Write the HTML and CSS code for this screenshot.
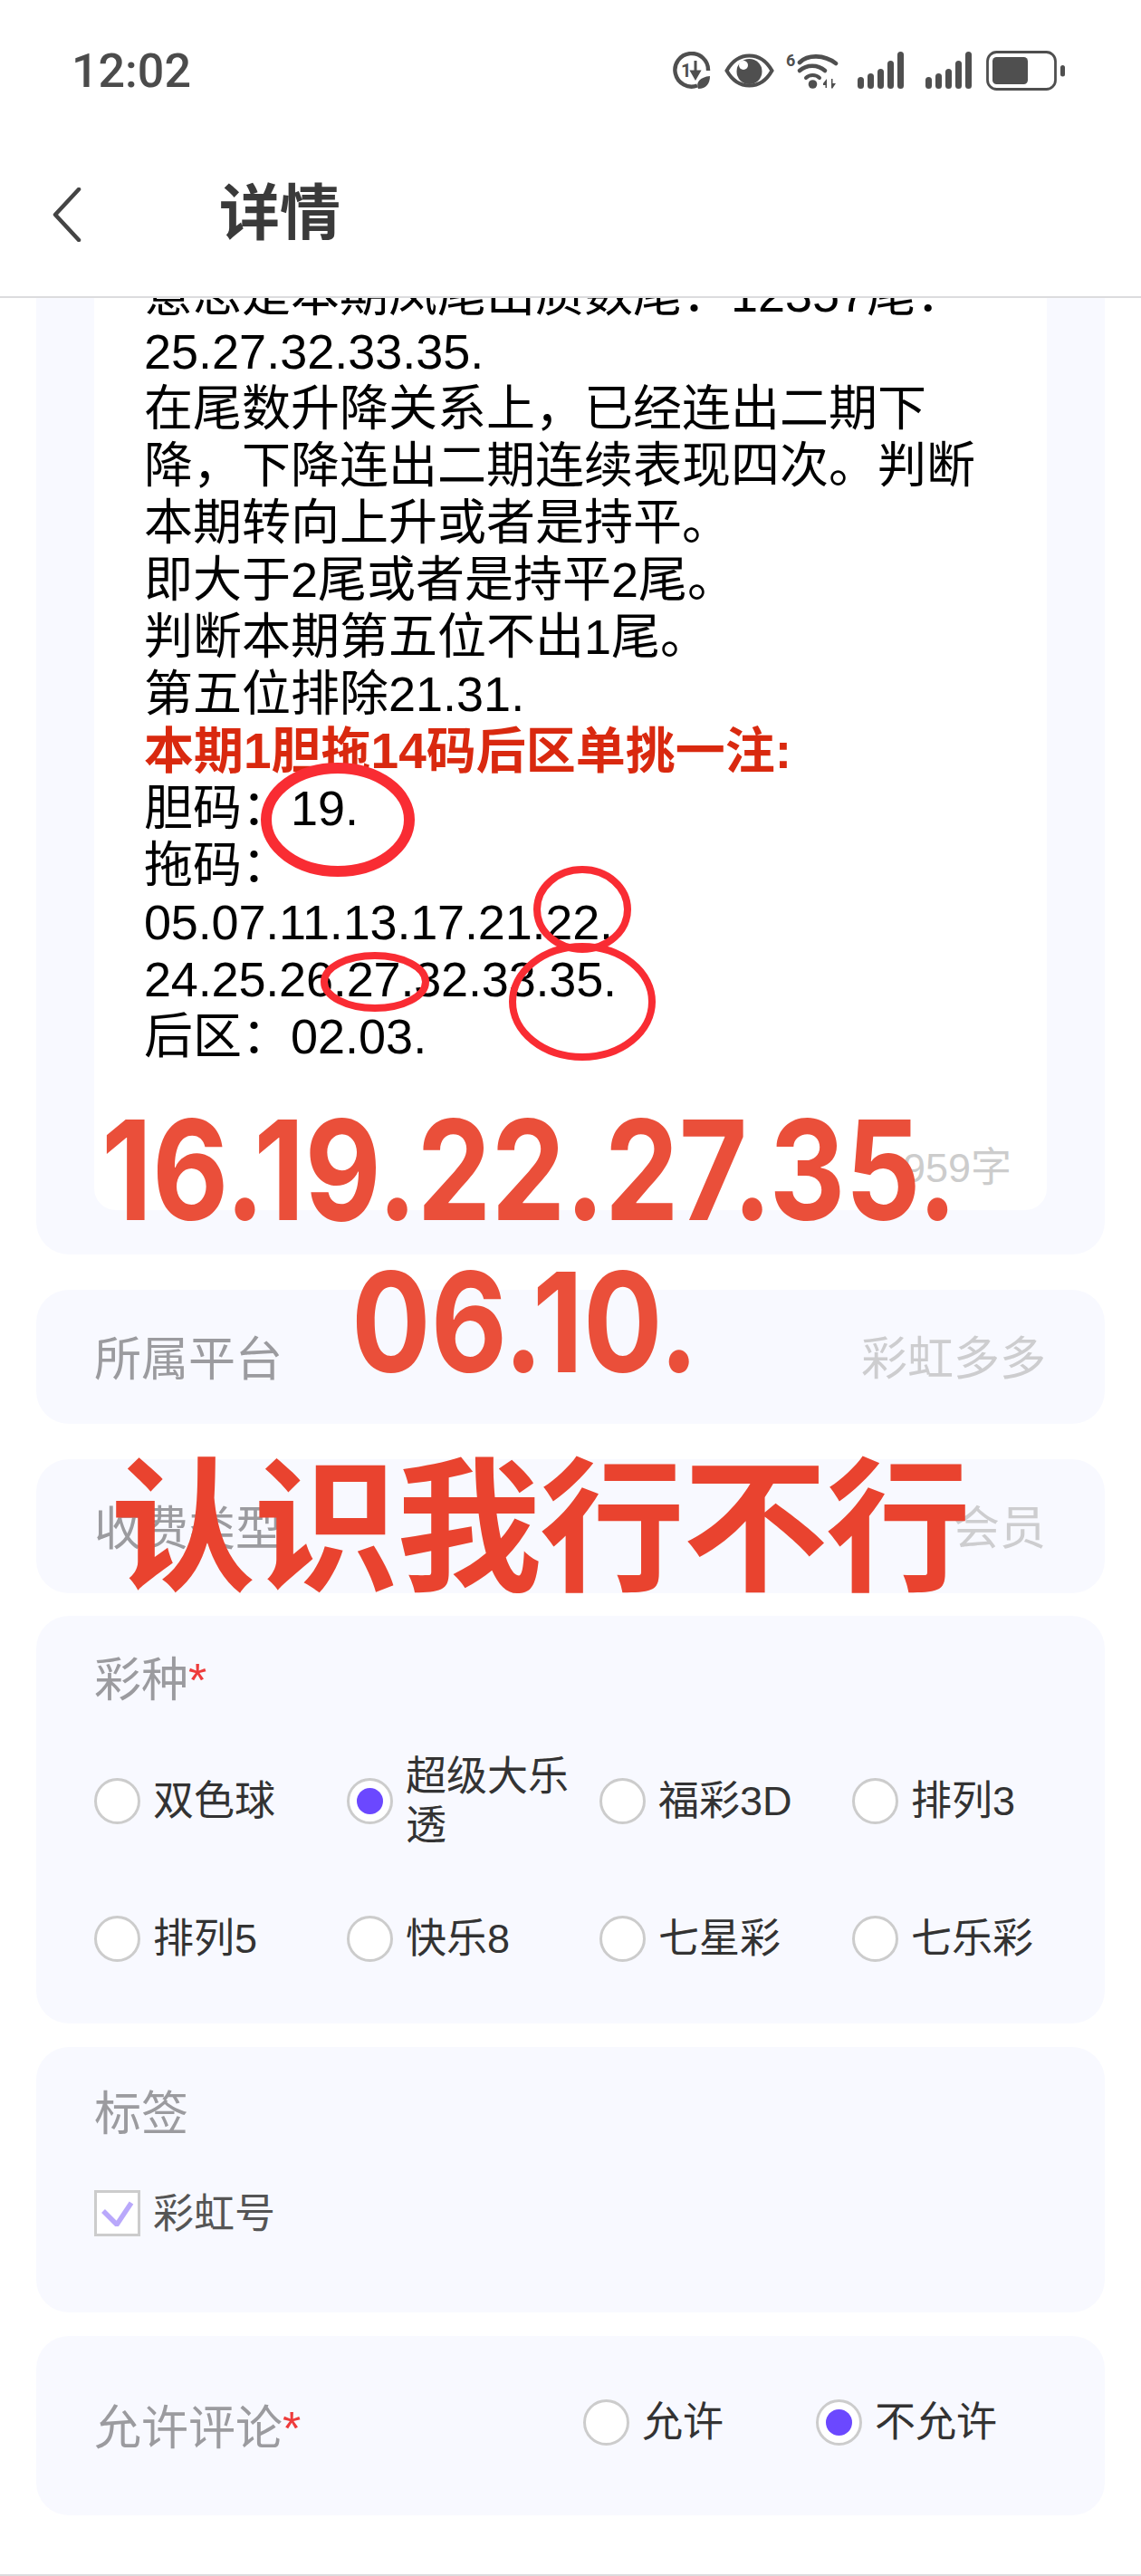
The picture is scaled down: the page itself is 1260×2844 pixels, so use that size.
FILE: index.html
```html
<!DOCTYPE html>
<html lang="zh-CN">
<head>
<meta charset="utf-8">
<title>详情</title>
<link rel="stylesheet" href="styles.css">
</head>
<body>
<div class="page">
  <div class="status">
    <span class="time">12:02</span>
    <div class="status-icons">
      <svg class="ic" width="42" height="42" viewBox="0 0 42 42"><path d="M27 37.5A18.3 18.3 0 1 1 39 21" fill="none" stroke="#4f4f4f" stroke-width="4.4"/><text x="9" y="28" class="ic-t" font-size="20">1</text><path d="M25 10v17M25 29l-4-7h8z" stroke="#4f4f4f" stroke-width="3" fill="#4f4f4f"/><path d="M28 41c-3-7 2-13 13-14 0 8-4 14-13 14z" fill="#4f4f4f"/></svg>
      <svg class="ic eye" width="55" height="38" viewBox="0 0 55 38"><path d="M2.5 19C15-3 40-3 52.500 19 40 41 15 41 2.500 19z" fill="none" stroke="#4f4f4f" stroke-width="4"/><circle cx="27.500" cy="20" r="14" fill="#4f4f4f"/><circle cx="21" cy="13" r="5" fill="#fff"/></svg>
      <svg class="ic wifi" width="58" height="42" viewBox="0 0 58 42"><text x="0" y="17" class="ic-t" font-size="18">6</text><path d="M15 13C24 4 42 4 55 14" fill="none" stroke="#4f4f4f" stroke-width="4.600" stroke-linecap="round"/><path d="M15 22c8-7 20-7 28 0" fill="none" stroke="#4f4f4f" stroke-width="4.600" stroke-linecap="round"/><path d="M22 30c4-4 11-4 15 0" fill="none" stroke="#4f4f4f" stroke-width="4" stroke-linecap="round"/><circle cx="29.500" cy="37" r="4.800" fill="#4f4f4f"/><path d="M41 36l4-5v10h-1.500v-3H41zM50 31h1.500v5H55l-4 6-1-1z" fill="#4f4f4f"/></svg>
      <svg class="ic sig" width="51" height="42" viewBox="0 0 51 42"><g fill="#4f4f4f"><rect x="0" y="28" width="7" height="13" rx="3.500"/><rect x="11" y="24" width="7" height="17" rx="3.500"/><rect x="22" y="19" width="7" height="22" rx="3.500"/><rect x="33" y="10" width="7" height="31" rx="3.500"/><rect x="44" y="0" width="7" height="41" rx="3.500"/></g></svg>
      <svg class="ic sig2" width="51" height="42" viewBox="0 0 51 42"><g fill="#4f4f4f"><rect x="0" y="28" width="7" height="13" rx="3.500"/><rect x="11" y="24" width="7" height="17" rx="3.500"/><rect x="22" y="19" width="7" height="22" rx="3.500"/><rect x="33" y="10" width="7" height="31" rx="3.500"/><rect x="44" y="0" width="7" height="41" rx="3.500"/></g></svg>
      <svg class="ic bat" width="87" height="44" viewBox="0 0 87 44"><rect x="1.500" y="1.500" width="75" height="41" rx="10" fill="none" stroke="#4f4f4f" stroke-width="2.800"/><rect x="7" y="7" width="39" height="30" rx="4.500" fill="#4f4f4f"/><rect x="82" y="16" width="5" height="12.500" rx="2.500" fill="#4f4f4f"/></svg>
    </div>
  </div>

  <header class="nav">
    <svg class="back" width="32" height="60" viewBox="0 0 32 60"><path d="M29 2L3 30l26 28" fill="none" stroke="#444" stroke-width="4.500" stroke-linecap="round" stroke-linejoin="round"/></svg>
    <h1 class="nav-title">详情</h1>
  </header>

  <main class="content">
    <section class="card post-card">
      <div class="post">
        <p>意思是本期凤尾出质数尾：12357尾：25.27.32.33.35.</p>
        <p>在尾数升降关系上，已经连出二期下降，下降连出二期连续表现四次。判断本期转向上升或者是持平。</p>
        <p>即大于2尾或者是持平2尾。</p>
        <p>判断本期第五位不出1尾。</p>
        <p>第五位排除21.31.</p>
        <p class="hot">本期1胆拖14码后区单挑一注:</p>
        <p>胆码：19.</p>
        <p>拖码：</p>
        <p class="nums">05.07.11.13.17.21.22.</p>
        <p class="nums">24.25.26.27.32.33.35.</p>
        <p>后区：02.03.</p>
        <div class="counter">959字</div>
      </div>
    </section>

    <section class="card row-card">
      <span class="label">所属平台</span>
      <span class="value">彩虹多多</span>
    </section>

    <section class="card row-card">
      <span class="label">收费类型</span>
      <span class="value">会员</span>
    </section>

    <section class="card kind-card">
      <div class="label">彩种<span class="req">*</span></div>
      <div class="kinds">
        <label class="opt"><span class="radio"></span><span class="txt">双色球</span></label>
        <label class="opt"><span class="radio on"></span><span class="txt">超级大乐透</span></label>
        <label class="opt"><span class="radio"></span><span class="txt">福彩3D</span></label>
        <label class="opt"><span class="radio"></span><span class="txt">排列3</span></label>
        <label class="opt"><span class="radio"></span><span class="txt">排列5</span></label>
        <label class="opt"><span class="radio"></span><span class="txt">快乐8</span></label>
        <label class="opt"><span class="radio"></span><span class="txt">七星彩</span></label>
        <label class="opt"><span class="radio"></span><span class="txt">七乐彩</span></label>
      </div>
    </section>

    <section class="card tag-card">
      <div class="label">标签</div>
      <label class="opt tag-opt">
        <span class="check"><svg width="36" height="28" viewBox="0 0 36 28"><path d="M2 11l15 15L33 2" fill="none" stroke="#b9a8fb" stroke-width="5.500"/></svg></span>
        <span class="txt">彩虹号</span>
      </label>
    </section>

    <section class="card allow-card">
      <span class="label">允许评论<span class="req">*</span></span>
      <div class="allow-opts">
        <label class="opt"><span class="radio"></span><span class="txt">允许</span></label>
        <label class="opt"><span class="radio on"></span><span class="txt">不允许</span></label>
      </div>
    </section>
  </main>
  <div class="foot-line"></div>

  <svg class="marks" width="1260" height="2844" viewBox="0 0 1260 2844">
    <ellipse cx="373" cy="905" rx="79" ry="57" fill="none" stroke="#f92c33" stroke-width="12"/>
    <ellipse cx="643" cy="1004" rx="50" ry="44" fill="none" stroke="#f92c33" stroke-width="8"/>
    <ellipse cx="414" cy="1084" rx="56" ry="29" fill="none" stroke="#f92c33" stroke-width="8"/>
    <ellipse cx="643" cy="1106" rx="77" ry="61" fill="none" stroke="#f92c33" stroke-width="8"/>
  </svg>
  <div class="stamp stamp-a">16.19.22.27.35.</div>
  <div class="stamp stamp-b">06.10.</div>
  <div class="stamp stamp-c">认识我行不行</div>
</div>
</body>
</html>
```
FILE: styles.css
```css
* { box-sizing: border-box; }
html, body { margin: 0; padding: 0; background: #fff; }
body { font-family: "Liberation Sans", "Noto Sans CJK SC", sans-serif; }
.page { position: relative; width: 1260px; height: 2844px; overflow: hidden; display: flex; flex-direction: column; background: #fff; }

.status { height: 158px; flex: none; display: flex; justify-content: space-between; padding: 0 84px 0 79px; align-items: flex-start; }
.time { font-family: Roboto, sans-serif; font-size: 52px; font-weight: 500; line-height: 60px; margin-top: 49px; color: #4b4b4b; }
.status-icons { display: flex; align-items: flex-start; margin-top: 56px; }
.ic { display: block; flex: none; margin-top: 1px; }
.ic-t { font-family: Roboto, sans-serif; font-weight: 700; fill: #4f4f4f; }
.eye { margin-left: 15px; margin-top: 3px; }
.wifi { margin-left: 13px; margin-top: 0; }
.sig { margin-left: 21px; }
.sig2 { margin-left: 24px; }
.bat { margin-left: 16px; margin-top: 0; }

.nav { height: 171px; flex: none; display: flex; align-items: center; border-bottom: 2px solid #dcdcde; padding-left: 58px; position: relative; background: #fff; z-index: 2; }
.back { display: block; margin-top: -12px; }
.nav-title { margin: -26px 0 0 152px; font-family: "Noto Sans CJK SC", sans-serif; font-size: 67px; line-height: 80px; font-weight: 700; color: #3a3a3a; }

.content { flex: 1; min-height: 0; overflow: hidden; padding: 0 40px; }
.card { background: #f8f9ff; border-radius: 36px; }
.post-card { margin-top: -40px; padding: 0 64px 49px; margin-bottom: 39px; }
.post { background: #fff; border-radius: 0 0 24px 24px; padding: 5px 55px 0; height: 1047px; position: relative; font-size: 54px; line-height: 63px; color: #000; }
.post p { margin: 0; }
.post .nums { letter-spacing: -.17px; }
.post .hot { color: #d9290f; font-weight: 700; font-size: 55px; }
.counter { position: absolute; right: 39px; top: 974px; font-size: 45px; line-height: 54px; color: #ccc; }

.label { font-size: 52px; line-height: 60px; padding-top: 5px; color: #9b9b9f; }
.req { color: #ee3b3b; }
.value { font-size: 51px; line-height: 60px; padding-top: 5px; color: #cdcdcf; }
.row-card { height: 148px; display: flex; align-items: center; justify-content: space-between; padding: 0 65px 0 64px; margin-bottom: 39px; }
.row-card + .row-card { margin-bottom: 25px; }

.opt { display: flex; align-items: center; gap: 14px; font-size: 45px; line-height: 54px; color: #333; }
.txt { padding-top: 3px; }
.radio { flex: none; width: 51px; height: 51px; border-radius: 50%; border: 3px solid #ccc; background: #fff; position: relative; top: 1px; }
.radio.on::after { content: ""; position: absolute; left: 8px; top: 8px; width: 29px; height: 29px; border-radius: 50%; background: #6b48ff; }

.kind-card { height: 450px; padding: 36px 0 0 64px; margin-bottom: 26px; }
.kinds { margin-top: 48px; display: grid; grid-template-columns: repeat(4, 279px); grid-auto-rows: 108px; row-gap: 44px; }

.tag-card { height: 293px; padding: 39px 64px 0; margin-bottom: 26px; }
.tag-opt { margin-top: 51px; color: #555; }
.check { flex: none; width: 51px; height: 51px; border: 3px solid #ccc; background: #fff; display: flex; align-items: center; justify-content: center; }

.allow-card { height: 198px; display: flex; align-items: center; justify-content: space-between; padding: 0 119px 0 64px; }
.allow-opts { display: flex; gap: 102px; margin-bottom: 10px; }

.foot-line { position: absolute; left: 0; right: 0; bottom: 0; height: 2px; background: #dcdcde; }

.marks { position: absolute; left: 0; top: 0; z-index: 3; pointer-events: none; }
.stamp { position: absolute; z-index: 4; white-space: nowrap; line-height: 1; }
.stamp-a, .stamp-b { font-family: Inter, sans-serif; font-weight: 700; font-size: 153px; color: #ea4f3a; transform: scaleX(.85); transform-origin: left top; }
.stamp-a { left: 112px; top: 1215px; }
.stamp-b { left: 388px; top: 1383px; }
.stamp-c { left: 122px; top: 1594px; font-family: "Noto Sans CJK SC", sans-serif; font-weight: 700; font-size: 160px; letter-spacing: -2px; color: #e9432f; }
```
